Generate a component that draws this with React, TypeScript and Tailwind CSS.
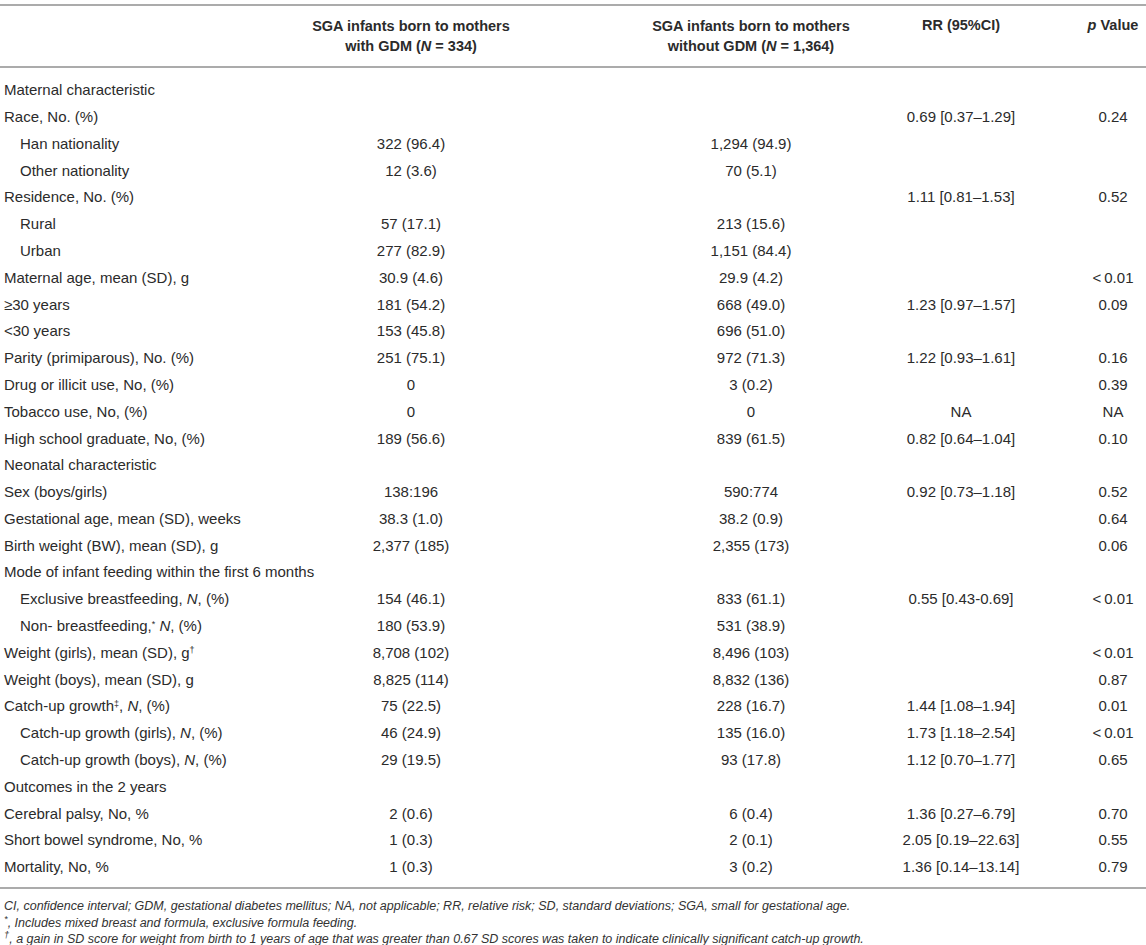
import type { ReactNode } from 'react'

type Row = {
  label: ReactNode
  indent?: boolean
  gdm?: string
  noGdm?: string
  rr?: string
  p?: string
}

const N = <i>N</i>

const rows: Row[] = [
  { label: 'Maternal characteristic' },
  { label: 'Race, No. (%)', rr: '0.69 [0.37–1.29]', p: '0.24' },
  { label: 'Han nationality', indent: true, gdm: '322 (96.4)', noGdm: '1,294 (94.9)' },
  { label: 'Other nationality', indent: true, gdm: '12 (3.6)', noGdm: '70 (5.1)' },
  { label: 'Residence, No. (%)', rr: '1.11 [0.81–1.53]', p: '0.52' },
  { label: 'Rural', indent: true, gdm: '57 (17.1)', noGdm: '213 (15.6)' },
  { label: 'Urban', indent: true, gdm: '277 (82.9)', noGdm: '1,151 (84.4)' },
  { label: 'Maternal age, mean (SD), g', gdm: '30.9 (4.6)', noGdm: '29.9 (4.2)', p: '<\u20090.01' },
  { label: '≥30 years', gdm: '181 (54.2)', noGdm: '668 (49.0)', rr: '1.23 [0.97–1.57]', p: '0.09' },
  { label: '<30 years', gdm: '153 (45.8)', noGdm: '696 (51.0)' },
  { label: 'Parity (primiparous), No. (%)', gdm: '251 (75.1)', noGdm: '972 (71.3)', rr: '1.22 [0.93–1.61]', p: '0.16' },
  { label: 'Drug or illicit use, No, (%)', gdm: '0', noGdm: '3 (0.2)', p: '0.39' },
  { label: 'Tobacco use, No, (%)', gdm: '0', noGdm: '0', rr: 'NA', p: 'NA' },
  { label: 'High school graduate, No, (%)', gdm: '189 (56.6)', noGdm: '839 (61.5)', rr: '0.82 [0.64–1.04]', p: '0.10' },
  { label: 'Neonatal characteristic' },
  { label: 'Sex (boys/girls)', gdm: '138:196', noGdm: '590:774', rr: '0.92 [0.73–1.18]', p: '0.52' },
  { label: 'Gestational age, mean (SD), weeks', gdm: '38.3 (1.0)', noGdm: '38.2 (0.9)', p: '0.64' },
  { label: 'Birth weight (BW), mean (SD), g', gdm: '2,377 (185)', noGdm: '2,355 (173)', p: '0.06' },
  { label: 'Mode of infant feeding within the first 6 months' },
  {
    label: <>Exclusive breastfeeding, {N}, (%)</>,
    indent: true,
    gdm: '154 (46.1)',
    noGdm: '833 (61.1)',
    rr: '0.55 [0.43-0.69]',
    p: '<\u20090.01',
  },
  {
    label: (
      <>
        Non- breastfeeding,<sup className="text-[9px]">*</sup> {N}, (%)
      </>
    ),
    indent: true,
    gdm: '180 (53.9)',
    noGdm: '531 (38.9)',
  },
  {
    label: (
      <>
        Weight (girls), mean (SD), g<sup className="text-[9px]">†</sup>
      </>
    ),
    gdm: '8,708 (102)',
    noGdm: '8,496 (103)',
    p: '<\u20090.01',
  },
  { label: 'Weight (boys), mean (SD), g', gdm: '8,825 (114)', noGdm: '8,832 (136)', p: '0.87' },
  {
    label: (
      <>
        Catch-up growth<sup className="text-[9px]">‡</sup>, {N}, (%)
      </>
    ),
    gdm: '75 (22.5)',
    noGdm: '228 (16.7)',
    rr: '1.44 [1.08–1.94]',
    p: '0.01',
  },
  {
    label: <>Catch-up growth (girls), {N}, (%)</>,
    indent: true,
    gdm: '46 (24.9)',
    noGdm: '135 (16.0)',
    rr: '1.73 [1.18–2.54]',
    p: '<\u20090.01',
  },
  {
    label: <>Catch-up growth (boys), {N}, (%)</>,
    indent: true,
    gdm: '29 (19.5)',
    noGdm: '93 (17.8)',
    rr: '1.12 [0.70–1.77]',
    p: '0.65',
  },
  { label: 'Outcomes in the 2 years' },
  { label: 'Cerebral palsy, No, %', gdm: '2 (0.6)', noGdm: '6 (0.4)', rr: '1.36 [0.27–6.79]', p: '0.70' },
  { label: 'Short bowel syndrome, No, %', gdm: '1 (0.3)', noGdm: '2 (0.1)', rr: '2.05 [0.19–22.63]', p: '0.55' },
  { label: 'Mortality, No, %', gdm: '1 (0.3)', noGdm: '3 (0.2)', rr: '1.36 [0.14–13.14]', p: '0.79' },
]

function TableRow({ row }: { row: Row }) {
  return (
    <div className="flex h-[26.8px] items-center whitespace-nowrap">
      <div className={['w-[300px]', row.indent ? 'pl-[20px]' : 'pl-[4px]'].join(' ')}>
        {row.label}
      </div>
      <div className="w-[222px] text-center">{row.gdm}</div>
      <div className="ml-[118px] w-[222px] text-center">{row.noGdm}</div>
      <div className="ml-[14px] w-[170px] text-center">{row.rr}</div>
      <div className="ml-[34px] w-[66px] text-center">{row.p}</div>
    </div>
  )
}

export default function App() {
  return (
    <div className="h-[945px] w-[1146px] overflow-hidden bg-white font-['Liberation_Sans',Arial,sans-serif] text-[15px] text-[#2b2b2b]">
      <div className="pt-[4px]">
        <div className="h-[2px] bg-[#ababab]" />
        <div className="flex h-[60px] items-center whitespace-nowrap text-[14.5px] font-bold leading-[20px]">
          <div className="w-[300px]" />
          <div className="w-[222px] text-center">
            SGA infants born to mothers
            <br />
            with GDM (<i>N</i> = 334)
          </div>
          <div className="ml-[118px] w-[222px] text-center">
            SGA infants born to mothers
            <br />
            without GDM (<i>N</i> = 1,364)
          </div>
          <div className="ml-[14px] w-[170px] self-start pt-[9px] text-center">RR (95%CI)</div>
          <div className="ml-[34px] w-[66px] self-start pt-[9px] text-center">
            <i>p</i> Value
          </div>
        </div>
        <div className="h-[2px] bg-[#ababab]" />
      </div>

      <div className="pt-[9px]">
        {rows.map((row, i) => (
          <TableRow key={i} row={row} />
        ))}
      </div>

      <div className="mt-[6px] h-[2px] bg-[#ababab]" />

      <div className="pl-[4px] pt-[9px] text-[12.5px] italic leading-[17px] text-[#333]">
        <p>
          CI, confidence interval; GDM, gestational diabetes mellitus; NA, not applicable; RR, relative risk; SD,
          standard deviations; SGA, small for gestational age.
        </p>
        <p>
          <sup>*</sup>, Includes mixed breast and formula, exclusive formula feeding.
        </p>
        <p className="-mt-[1px]">
          <sup>†</sup>, a gain in SD score for weight from birth to 1 years of age that was greater than 0.67 SD scores
          was taken to indicate clinically significant catch-up growth.
        </p>
      </div>
    </div>
  )
}
